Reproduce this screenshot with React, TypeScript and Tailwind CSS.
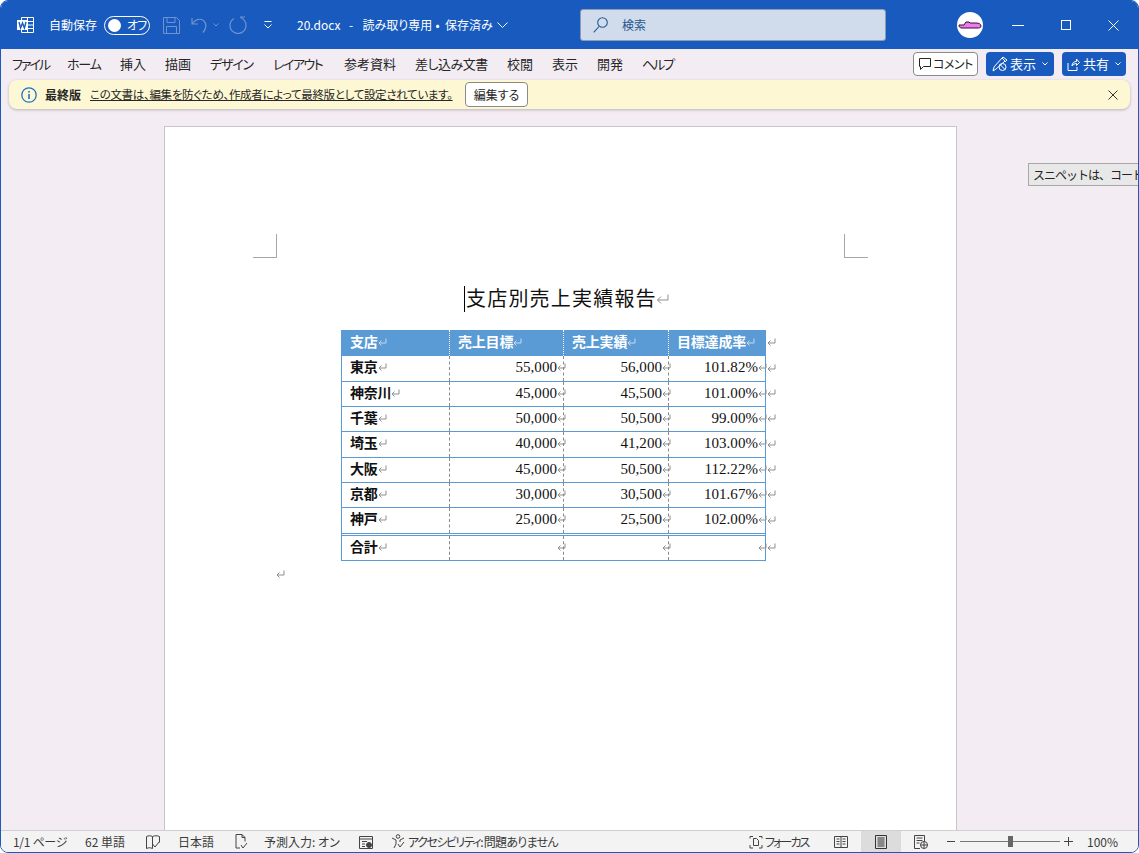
import React from "react";

const Ret = ({ big = false, light = false, className = "" }: { big?: boolean; light?: boolean; className?: string }) => (
  <svg width={big ? 13 : 9} height={big ? 12 : 9} viewBox={big ? "0 0 13 12" : "0 0 9 9"} fill="none" stroke={light ? "#c4d9ef" : "#8f8f8f"} strokeWidth="1" className={`shrink-0 inline-block ${className}`}>
    {big ? <path d="M12 1.500v5.500H1.500M5 3.500 1.500 7 5 10.500" /> : <path d="M8 .5v4.500H1M3.500 2.500 1 5l2.500 2.500" />}
  </svg>
);

const tabs = [
  { t: "ファイル", c: "ml-[11px] w-[38px] tracking-[-2px]" },
  { t: "ホーム", c: "ml-[17px] w-[34px] tracking-[-1.200px]" },
  { t: "挿入", c: "ml-[19px] w-[26px]" },
  { t: "描画", c: "ml-[19px] w-[26px]" },
  { t: "デザイン", c: "ml-[19px] w-[43px] tracking-[-1.200px]" },
  { t: "レイアウト", c: "ml-[20px] w-[50px] tracking-[-1.500px]" },
  { t: "参考資料", c: "ml-[21px] w-[52px]" },
  { t: "差し込み文書", c: "ml-[19px] w-[73px] tracking-[-0.500px]" },
  { t: "校閲", c: "ml-[19px] w-[26px]" },
  { t: "表示", c: "ml-[19px] w-[26px]" },
  { t: "開発", c: "ml-[19px] w-[26px]" },
  { t: "ヘルプ", c: "ml-[19px] w-[33px] tracking-[-2px]" },
];

const rows = [
  { h: "h-[26px]", b: "東京", v: ["55,000", "56,000", "101.82%"] },
  { h: "h-[25px]", b: "神奈川", v: ["45,000", "45,500", "101.00%"] },
  { h: "h-[25px]", b: "千葉", v: ["50,000", "50,500", "99.00%"] },
  { h: "h-[26px]", b: "埼玉", v: ["40,000", "41,200", "103.00%"] },
  { h: "h-[25px]", b: "大阪", v: ["45,000", "50,500", "112.22%"] },
  { h: "h-[25px]", b: "京都", v: ["30,000", "30,500", "101.67%"] },
  { h: "h-[26px]", b: "神戸", v: ["25,000", "25,500", "102.00%"] },
];

const cw = ["w-[109px] border-l", "w-[114px]", "w-[105px]", "w-[97px]"];
const mincho = "font-['Liberation_Serif','Noto_Sans_CJK_JP',serif]";

const DataRow = ({ h, b, v }: { h: string; b: string; v: string[] }) => (
  <div className={`flex ${h} text-[#111]`}>
    <div className={`${cw[0]} border-[#5b9bd5] border-b flex items-center pl-2 pb-[2px] relative`}>
      <span className="font-bold text-[14px] tracking-[-0.2px]">{b}</span>
      <Ret />
      <span className="absolute right-0 top-0 bottom-0 border-r border-dashed border-[#8a8a8a]" />
    </div>
    {[1, 2, 3].map((i) => (
      <div key={i} className={`${cw[i]} border-b border-[#5b9bd5] flex items-center justify-end pb-[2px] relative ${i === 3 ? "border-r" : ""}`}>
        <span className="text-[15px] tracking-[0.05px]">{v[i - 1]}</span>
        <Ret className="-mr-[2px]" />
        {i < 3 && <span className="absolute right-0 top-0 bottom-0 border-r border-dashed border-[#8a8a8a]" />}
      </div>
    ))}
    <div className="w-[12px] flex items-center pl-[1px] pb-[2px]"><Ret /></div>
  </div>
);

function IconWord() {
  return (
    <svg width="17" height="18" viewBox="0 0 17 18" fill="none" className="shrink-0">
      <path d="M4.500 1.500h12v15h-12z" stroke="#fff" />
      <path d="M10 5.500h6.500M10 9h6.500M10 12.500h6.500M10.500 1.500v15" stroke="#fff" />
      <rect x="0" y="4" width="11" height="10" fill="#fff" />
      <path d="M2 6l1.600 6 1.900-5 1.900 5L9 6" stroke="#185abd" strokeWidth="1.400" />
    </svg>
  );
}

export default function App() {
  return (
    <div className="w-[1139px] h-[853px] bg-white">
      <div className="relative w-full h-full box-border border border-[#185abd] rounded-[8px] overflow-hidden bg-[#f3edf3] flex flex-col font-['Noto_Sans_CJK_JP','Noto_Sans',sans-serif] [font-feature-settings:'palt'] text-[#262626]">
        {/* Title bar */}
        <div className="h-[48px] shrink-0 bg-[#185abd] flex items-center text-white text-[12px]">
          <div className="ml-[16px]"><IconWord /></div>
          <span className="ml-[15px] w-[48px] whitespace-nowrap">自動保存</span>
          <div className="ml-[7px] w-[46px] h-[19px] shrink-0 rounded-full border border-white flex items-center pl-[3px]">
            <span className="w-[13px] h-[13px] rounded-full bg-white shrink-0" />
            <span className="ml-[6px] text-[12px] tracking-[-1px] whitespace-nowrap">オフ</span>
          </div>
          <svg className="ml-[13px] shrink-0" width="17" height="17" viewBox="0 0 17 17" fill="none" stroke="#6f93d2">
            <path d="M.5.5h13l3 3v13H.5zM4 .5v5h8v-5M3.500 16.500v-7h10v7" />
          </svg>
          <svg className="ml-[11px] shrink-0" width="16" height="17" viewBox="0 0 16 17" fill="none" stroke="#6f93d2" strokeWidth="1.200">
            <path d="M1 1v6h6M1.500 6.500C4 2.500 9 1 12.500 3.500c3.500 3 3 8-.5 12" />
          </svg>
          <svg className="ml-[6px] shrink-0" width="6" height="4" viewBox="0 0 6 4" fill="none" stroke="#6f93d2"><path d="M.5.5 3 3 5.500.5" /></svg>
          <svg className="ml-[10px] shrink-0" width="18" height="18" viewBox="0 0 18 18" fill="none" stroke="#6f93d2" strokeWidth="1.200">
            <path d="M11 1h5M11.500 1.500C15 3 17 6 17 9.500a8 8 0 1 1-12-7" />
          </svg>
          <svg className="ml-[17px] shrink-0" width="8" height="8" viewBox="0 0 8 8" fill="none" stroke="#fff"><path d="M.5.5h7M.5 3.500 4 7l3.500-3.500" /></svg>
          <div className="ml-[25px] w-[196px] flex items-center whitespace-nowrap text-[12px]">
            <span className="w-[43px]">20.docx</span>
            <span className="ml-[9px] w-[6px]">-</span>
            <span className="ml-[8px] w-[67px]">読み取り専用</span>
            <span className="ml-[6px] w-[6px]">•</span>
            <span className="ml-[4px] [font-feature-settings:normal]">保存済み</span>
          </div>
          <svg className="ml-[4px] shrink-0" width="11" height="6" viewBox="0 0 11 6" fill="none" stroke="#fff"><path d="M.5.5l5 5 5-5" /></svg>
          <div className="ml-[72px] w-[306px] h-[32px] shrink-0 rounded-[3px] bg-[#d0dcec] border border-[#8f9bb0] flex items-center text-[#28568f] text-[12px]">
            <svg className="ml-[12px] shrink-0" width="15" height="16" viewBox="0 0 15 16" fill="none" stroke="#28568f" strokeWidth="1.100">
              <circle cx="9.500" cy="5.500" r="4.800" /><path d="M6 9.500.7 15.300" />
            </svg>
            <span className="ml-[14px]">検索</span>
          </div>
          <div className="ml-[71px] w-[26px] h-[26px] shrink-0 rounded-full bg-white flex items-center justify-center">
            <svg width="24" height="10" viewBox="0 0 24 10"><path d="M1 5h5l2-3h3l1 1h6c3 0 5 1 5 3s-2 2-4 2H4C2 8 1 7 1 5z" fill="#ee78ee" stroke="#301030" strokeWidth="1" /></svg>
          </div>
          <span className="ml-[29px] w-[12px] h-[1px] bg-white" />
          <span className="ml-[37px] w-[10px] h-[10px] border border-white" />
          <svg className="ml-[37px] shrink-0" width="11" height="11" viewBox="0 0 11 11" stroke="#fff"><path d="M.5.500l10 10M10.500.500l-10 10" /></svg>
        </div>

        {/* Ribbon tabs */}
        <div className="h-[30px] shrink-0 flex items-center text-[13px] text-[#262626]">
          {tabs.map((x) => (
            <span key={x.t} className={`${x.c} whitespace-nowrap`}>{x.t}</span>
          ))}
          <div className="ml-auto mr-[12px] flex items-center text-[12px]">
            <div className="w-[65px] h-[24px] bg-white border border-[#8a8a8a] rounded-[4px] flex items-center pl-[5px] gap-[2px]">
              <svg className="shrink-0" width="12" height="12" viewBox="0 0 12 12" fill="none" stroke="#262626"><path d="M.5.500h11v8H4.500l-3 3v-3h-1z" /></svg>
              <span className="whitespace-nowrap tracking-[-0.500px]">コメント</span>
            </div>
            <div className="ml-[8px] w-[68px] h-[24px] bg-[#185abd] rounded-[4px] flex items-center pl-[6px] text-white text-[13px]">
              <svg className="shrink-0" width="16" height="16" viewBox="0 0 16 16" fill="none" stroke="#fff"><path d="M1 15l1-4 8-9 3 3-9 8zM10 2l1-1 4 3-2 2" /><circle cx="10.500" cy="11" r="3.500" /><path d="M8 8.500l5 5" /></svg>
              <span className="ml-[2px] whitespace-nowrap">表示</span>
              <svg className="ml-[6px] shrink-0" width="6" height="4" viewBox="0 0 6 4" fill="none" stroke="#fff"><path d="M.5.500 3 3 5.500.500" /></svg>
            </div>
            <div className="ml-[8px] w-[64px] h-[24px] bg-[#185abd] rounded-[4px] flex items-center pl-[5px] text-white text-[13px]">
              <svg className="shrink-0" width="13" height="13" viewBox="0 0 13 13" fill="none" stroke="#fff"><path d="M1 5v7.500h9V9M5 8c0-3 2-4.500 4.500-4.500V1L12.500 4.500 9.500 7.500V5.500C7.500 5.500 6 6.500 5 8z" /></svg>
              <span className="ml-[3px] whitespace-nowrap">共有</span>
              <svg className="ml-[6px] shrink-0" width="6" height="4" viewBox="0 0 6 4" fill="none" stroke="#fff"><path d="M.5.500 3 3 5.500.500" /></svg>
            </div>
          </div>
        </div>

        {/* Message bar */}
        <div className="mt-[1px] ml-[8px] w-[1121px] h-[29px] shrink-0 bg-[#fdf8d3] rounded-[8px] shadow-[0_1px_3px_rgba(0,0,0,0.25)] flex items-center text-[12px]">
          <svg className="ml-[12px] shrink-0" width="16" height="16" viewBox="0 0 16 16" fill="none">
            <circle cx="8" cy="8" r="7.200" stroke="#1a73c8" strokeWidth="1.300" />
            <rect x="7.200" y="7" width="1.600" height="5" fill="#1a73c8" />
            <rect x="7.200" y="4" width="1.600" height="1.600" fill="#1a73c8" />
          </svg>
          <span className="ml-[8px] w-[36px] font-bold whitespace-nowrap">最終版</span>
          <span className="ml-[9px] w-[363px] shrink-0 underline whitespace-nowrap text-[11.500px] tracking-[-0.310px]">この文書は、編集を防ぐため、作成者によって最終版として設定されています。</span>
          <div className="ml-[12px] w-[63px] h-[25px] shrink-0 bg-white border border-[#8a8a8a] rounded-[4px] flex items-center justify-center">編集する</div>
          <svg className="ml-[580px] shrink-0" width="10" height="10" viewBox="0 0 10 10" stroke="#333"><path d="M.5.500l9 9M9.500.500l-9 9" /></svg>
        </div>

        {/* Document */}
        <div className="flex-1 min-h-0 pt-[17px] pl-[163px]">
          <div className="relative w-[793px] h-full bg-white border-x border-t border-[#c6c6c6]">
            <div className="absolute left-[88px] top-[107px] w-[24px] h-[24px] border-r border-b border-[#a6a6a6]" />
            <div className="absolute left-[679px] top-[107px] w-[24px] h-[24px] border-l border-b border-[#a6a6a6]" />

            <div className="mt-[159px] ml-[299px] h-[26px] flex items-center whitespace-nowrap text-[20px] leading-[24px] tracking-[1.200px] text-[#111] [font-feature-settings:normal]">
              <span className="w-[1px] h-[26px] bg-black mr-[1px]" />
              <span className="-translate-y-[1px]">支店別売上実績報告</span>
              <Ret big className="-ml-[1px]" />
            </div>

            <div className={`mt-[18px] ml-[176px] w-[437px] ${mincho}`}>
              <div className="flex h-[26px] text-white font-bold text-[14px]">
                {[
                  ["支店", "w-[109px] pl-[9px]"],
                  ["売上目標", "w-[114px] pl-[8px]"],
                  ["売上実績", "w-[105px] pl-[8px]"],
                  ["目標達成率", "w-[97px] pl-[8px]"],
                ].map(([t, c], i) => (
                  <div key={t} className={`${c} bg-[#5b9bd5] flex items-center pb-[2px] tracking-[-0.2px] ${i < 3 ? "border-r border-dotted border-white" : ""}`}>
                    <span>{t}</span>
                    <Ret light />
                  </div>
                ))}
                <div className="w-[12px] flex items-center pl-[1px] pb-[2px]"><Ret /></div>
              </div>
              {rows.map((r) => <DataRow key={r.b} {...r} />)}
              <div className="w-[425px] h-[1px] border-x border-[#5b9bd5]" />
              <div className="w-[425px] h-[1px] bg-[#5b9bd5]" />
              <DataRow h="h-[25px]" b="合計" v={["", "", ""]} />
            </div>

            <div className="mt-[7px] ml-[111px] h-[12px] flex items-center"><Ret /></div>
          </div>
        </div>

        {/* Status bar */}
        <div className="h-[22px] shrink-0 bg-[#f3f3f3] border-t border-[#cfcfcf] flex items-center text-[12px] text-[#3a3a3a]">
          <span className="ml-[12px] w-[52px] whitespace-nowrap tracking-[-0.300px]">1/1 ページ</span>
          <span className="ml-[20px] w-[42px] whitespace-nowrap">62 単語</span>
          <svg className="ml-[19px] shrink-0" width="14" height="14" viewBox="0 0 14 14" fill="none" stroke="#444"><path d="M.5 1.500c2-1 4-1 6 0v12c-2-1-4-1-6 0zM6.500 1.500c2-1 5-1 7 0v6M6.500 9l2.500 3 4-5" /></svg>
          <span className="ml-[18px] w-[36px] whitespace-nowrap">日本語</span>
          <svg className="ml-[21px] shrink-0" width="13" height="15" viewBox="0 0 13 15" fill="none" stroke="#444"><path d="M1 14V.5h6l3 3v4M7 .5v3h3M1 14h4M6 11l2 3 4-5" /></svg>
          <span className="ml-[16px] w-[75px] whitespace-nowrap">予測入力: オン</span>
          <svg className="ml-[20px] shrink-0" width="14" height="14" viewBox="0 0 14 14" fill="none" stroke="#444"><path d="M.5 1.500h13v12H.5zM.5 4h13M3 6.500h5M3 9h3M3 11.500h3" /><circle cx="10" cy="10" r="2.500" fill="#444" /></svg>
          <svg className="ml-[18px] shrink-0" width="14" height="15" viewBox="0 0 14 15" fill="none" stroke="#444"><circle cx="7" cy="2.500" r="1.800" /><path d="M1 4l4 2v4l-2 4M13 4L9 6v2M7 10l2 3 4-5" /></svg>
          <div className="ml-[3px] w-[150px] flex items-center whitespace-nowrap">
            <span className="w-[79px] tracking-[-1.500px]">アクセシビリティ:</span>
            <span className="tracking-[-0.700px]">問題ありません</span>
          </div>
          <svg className="ml-[191px] shrink-0" width="14" height="14" viewBox="0 0 14 14" fill="none" stroke="#444"><path d="M4 1.500H1v2M10 1.500h3v2M1 10v3h3M10 13h3v-3M4.500 3.500h3l2 2v5h-5z" /></svg>
          <span className="ml-[2px] w-[46px] whitespace-nowrap tracking-[-1.900px]">フォーカス</span>
          <svg className="ml-[23px] shrink-0" width="14" height="12" viewBox="0 0 14 12" fill="none" stroke="#444"><path d="M.5.500h13v11H.5zM7 .5v11M2.500 3h3M2.500 5.500h3M2.500 8h3M8.500 3h3M8.500 5.500h3M8.500 8h3" /></svg>
          <div className="ml-[13px] w-[40px] h-[21px] bg-[#dcdcdc] flex items-center justify-center">
            <svg width="12" height="14" viewBox="0 0 12 14" fill="none" stroke="#333"><path d="M.5.500h11v13H.5zM2.500 3h7M2.500 5h7M2.500 7h7M2.500 9h7M2.500 11h7" /></svg>
          </div>
          <svg className="ml-[13px] shrink-0" width="14" height="14" viewBox="0 0 14 14" fill="none" stroke="#444"><path d="M6 13.500H.5V.5h10v6M2.500 3h6M2.500 5.500h6M2.500 8h3" /><circle cx="10" cy="10" r="3.500" /><path d="M6.500 10h7M10 6.500v7" /></svg>
          <span className="ml-[19px] w-[8px] h-[1px] bg-[#444]" />
          <div className="ml-[5px] w-[100px] h-[11px] flex items-center relative">
            <span className="w-full h-[1px] bg-[#777]" />
            <span className="absolute left-[48px] top-0 w-[5px] h-[11px] bg-[#666]" />
          </div>
          <svg className="ml-[4px] shrink-0" width="9" height="9" viewBox="0 0 9 9" stroke="#444"><path d="M0 4.500h9M4.500 0v9" /></svg>
          <span className="ml-[14px] w-[33px] whitespace-nowrap">100%</span>
        </div>

        {/* Tooltip */}
        <div className="absolute left-[1027px] top-[162px] w-[130px] h-[23px] bg-[#e8e8e8] border border-[#a8a8a8] flex items-center pl-[4px] text-[12px] text-[#222] whitespace-nowrap tracking-[-1px] [font-feature-settings:normal]">
          スニペットは、コード
        </div>
      </div>
    </div>
  );
}
